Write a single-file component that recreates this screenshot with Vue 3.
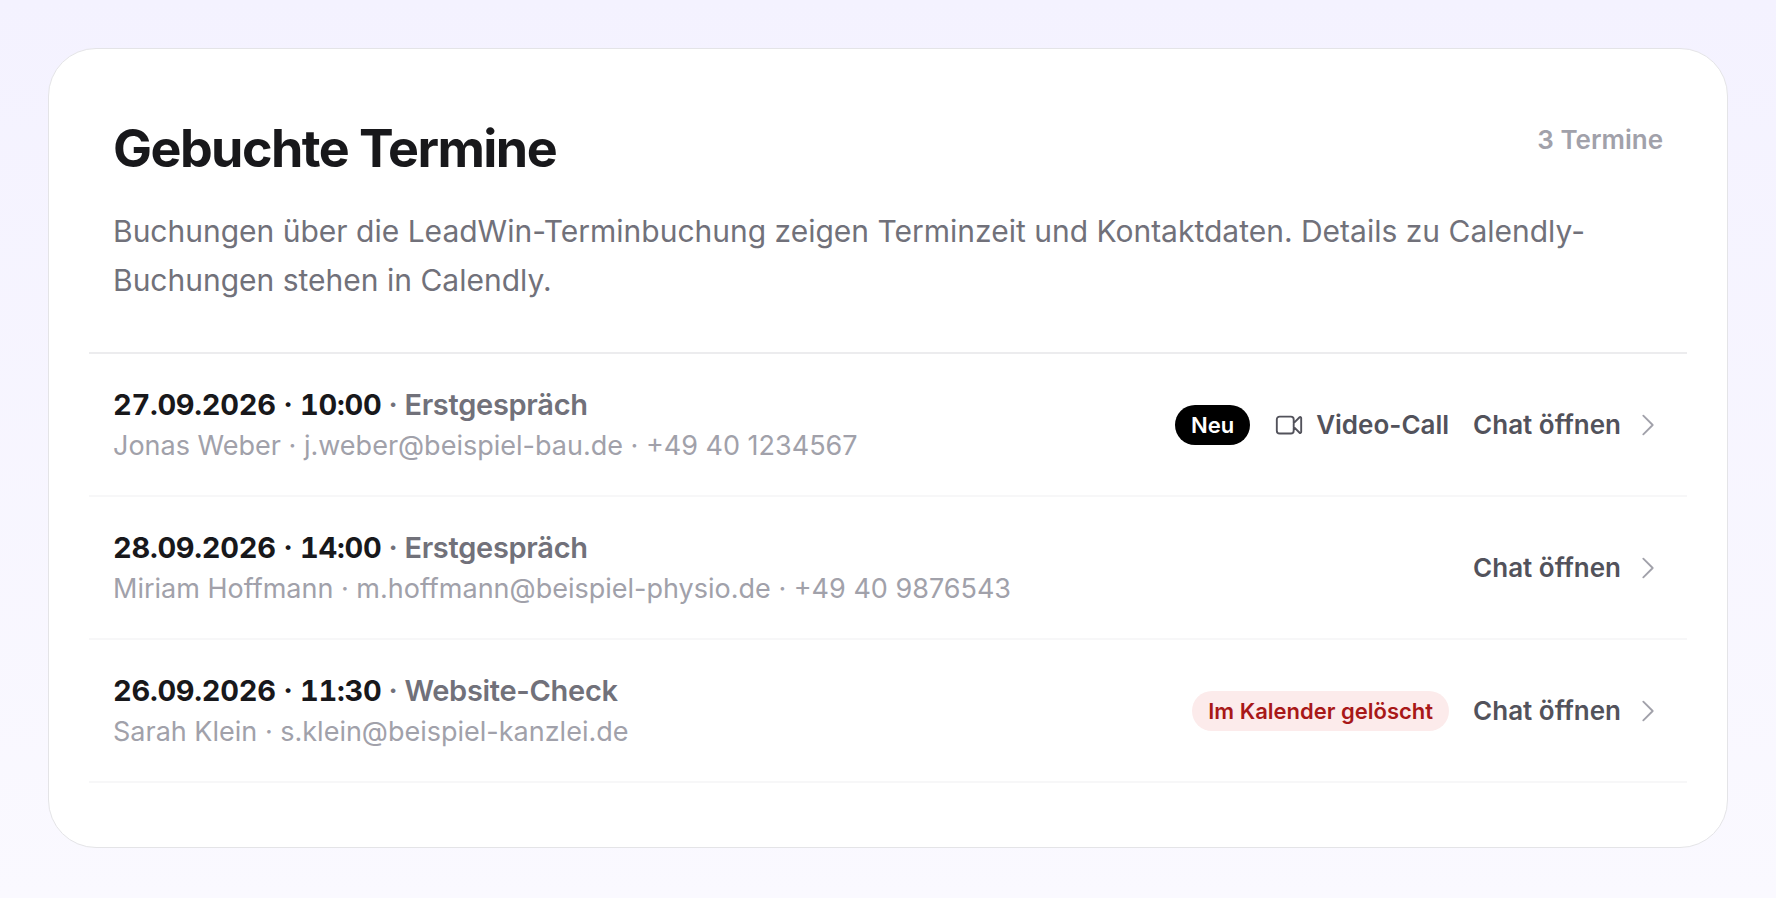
<script setup>
const appointments = [
  {
    id: 1,
    time: '27.09.2026 · 10:00',
    type: 'Erstgespräch',
    contact: 'Jonas Weber · j.weber@beispiel-bau.de · +49 40 1234567',
    isNew: true,
    video: true,
  },
  {
    id: 2,
    time: '28.09.2026 · 14:00',
    type: 'Erstgespräch',
    contact: 'Miriam Hoffmann · m.hoffmann@beispiel-physio.de · +49 40 9876543',
  },
  {
    id: 3,
    time: '26.09.2026 · 11:30',
    type: 'Website-Check',
    contact: 'Sarah Klein · s.klein@beispiel-kanzlei.de',
    deleted: true,
  },
]
</script>

<template>
  <main class="page">
    <section class="card">
      <header class="header">
        <div class="heading">
          <h1>Gebuchte Termine</h1>
          <span class="count">{{ appointments.length }} Termine</span>
        </div>
        <p class="intro">
          Buchungen über die LeadWin-Terminbuchung zeigen Terminzeit und Kontaktdaten. Details zu Calendly-Buchungen
          stehen in Calendly.
        </p>
      </header>
      <ul class="list">
        <li v-for="item in appointments" :key="item.id" class="row">
          <div class="info">
            <div class="when">
              <span class="time">{{ item.time }}</span><span class="type"> · {{ item.type }}</span>
            </div>
            <div class="contact">{{ item.contact }}</div>
          </div>
          <div class="actions">
            <span v-if="item.isNew" class="badge badge-new">Neu</span>
            <span v-if="item.deleted" class="badge badge-deleted">Im Kalender gelöscht</span>
            <a v-if="item.video" class="action" href="#video">
              <svg class="icon" viewBox="0 0 24 24" aria-hidden="true">
                <path
                  d="m15.75 10.5 4.72-4.72a.75.75 0 0 1 1.28.53v11.38a.75.75 0 0 1-1.28.53l-4.72-4.72M4.5 18.75h9a2.25 2.25 0 0 0 2.25-2.25v-9a2.25 2.25 0 0 0-2.25-2.25h-9A2.25 2.25 0 0 0 2.25 7.5v9a2.25 2.25 0 0 0 2.25 2.25Z"
                />
              </svg>
              Video-Call
            </a>
            <a class="action" href="#chat">
              Chat öffnen
              <svg class="icon chevron" viewBox="0 0 24 24" aria-hidden="true">
                <path d="m8.25 4.5 7.5 7.5-7.5 7.5" />
              </svg>
            </a>
          </div>
        </li>
      </ul>
    </section>
  </main>
</template>

<style>
body {
  margin: 0;
}
</style>

<style scoped>
.page {
  box-sizing: border-box;
  min-height: 100vh;
  padding: 48px;
  background: linear-gradient(#f4f2ff, #faf9ff);
  font-family: Inter, "Liberation Sans", sans-serif;
  color: #18181b;
}

.card {
  box-sizing: border-box;
  padding: 64px 40px;
  border: 1px solid #e4e4e7;
  border-radius: 48px;
  background: #fff;
}

.header {
  padding: 0 24px 47px;
}

.heading {
  display: flex;
  justify-content: space-between;
  align-items: flex-start;
}

h1 {
  margin: 0;
  font-size: 52px;
  line-height: 72px;
  font-weight: 700;
  letter-spacing: -0.03em;
}

.count {
  padding-top: 7px;
  font-size: 26px;
  line-height: 40px;
  font-weight: 600;
  color: #a1a1aa;
}

.intro {
  margin: 22px 0 0;
  font-size: 30px;
  line-height: 49px;
  color: #71717a;
}

.list {
  margin: 0;
  padding: 0;
  list-style: none;
  border-top: 2px solid #ececee;
}

.row {
  display: flex;
  justify-content: space-between;
  align-items: center;
  gap: 24px;
  padding: 30px 24px 29px;
  border-bottom: 2px solid #f7f7f8;
}

.when {
  font-size: 29px;
  line-height: 41px;
  font-weight: 600;
  letter-spacing: -0.01em;
}

.time {
  font-weight: 700;
  font-variant-numeric: tabular-nums;
  font-variant-ligatures: no-contextual;
}

.type {
  color: #71717a;
}

.contact {
  font-size: 27px;
  line-height: 41px;
  color: #a1a1aa;
}

.actions {
  display: flex;
  align-items: center;
  gap: 24px;
  white-space: nowrap;
}

.badge {
  padding: 0 16px;
  border-radius: 20px;
  font-size: 22px;
  line-height: 40px;
  font-weight: 600;
}

.badge-new {
  background: #000;
  color: #fff;
}

.badge-deleted {
  background: #fcebeb;
  color: #a81818;
}

.action {
  display: flex;
  align-items: center;
  gap: 12px;
  font-size: 26px;
  line-height: 40px;
  font-weight: 600;
  color: #52525b;
  text-decoration: none;
}

.icon {
  width: 30px;
  height: 30px;
  fill: none;
  stroke: currentColor;
  stroke-width: 1.5;
  stroke-linecap: round;
  stroke-linejoin: round;
}

.chevron {
  color: #a1a1aa;
}
</style>
